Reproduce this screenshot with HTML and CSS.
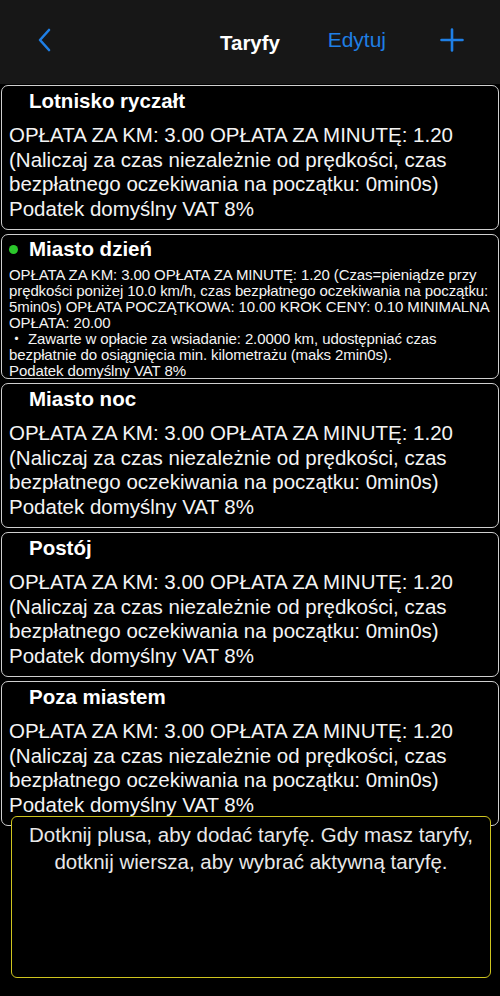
FILE: index.html
```html
<!DOCTYPE html>
<html lang="pl">
<head>
  <meta charset="UTF-8">
  <title>Taryfy</title>
  <link rel="stylesheet" href="styles.css">
</head>
<body>

<div class="ekran">

  <div class="nav">
    <div class="nav-back">
      <svg width="16" height="24" viewBox="0 0 16 24"><path d="M12 2 L3 12 L12 22" fill="none" stroke="#1f7fe5" stroke-width="2.6" stroke-linecap="round" stroke-linejoin="round"/></svg>
    </div>
    <div class="nav-title">Taryfy</div>
    <div class="nav-edit">Edytuj</div>
    <div class="nav-plus">
      <svg width="24" height="24" viewBox="0 0 24 24"><path d="M12 1.5 V22.5 M1.5 12 H22.5" fill="none" stroke="#1f7fe5" stroke-width="2.6" stroke-linecap="round"/></svg>
    </div>
  </div>

  <div class="lista">

    <div class="taryfa">
      <div class="tytul"><span class="kropka"></span>Lotnisko ryczałt</div>
      <div class="opis">OPŁATA ZA KM: 3.00 OPŁATA ZA MINUTĘ: 1.20 (Naliczaj za czas niezależnie od prędkości, czas bezpłatnego oczekiwania na początku: 0min0s)<br>Podatek domyślny VAT 8%</div>
    </div>

    <div class="taryfa aktywna">
      <div class="tytul"><span class="kropka"></span>Miasto dzień</div>
      <div class="opis maly">OPŁATA ZA KM: 3.00 OPŁATA ZA MINUTĘ: 1.20 (Czas=pieniądze przy prędkości poniżej 10.0 km/h, czas bezpłatnego oczekiwania na początku: 5min0s) OPŁATA POCZĄTKOWA: 10.00 KROK CENY: 0.10 MINIMALNA OPŁATA: 20.00<br>・ Zawarte w opłacie za wsiadanie: 2.0000 km, udostępniać czas bezpłatnie do osiągnięcia min. kilometrażu (maks 2min0s).<br>Podatek domyślny VAT 8%</div>
    </div>

    <div class="taryfa">
      <div class="tytul"><span class="kropka"></span>Miasto noc</div>
      <div class="opis">OPŁATA ZA KM: 3.00 OPŁATA ZA MINUTĘ: 1.20 (Naliczaj za czas niezależnie od prędkości, czas bezpłatnego oczekiwania na początku: 0min0s)<br>Podatek domyślny VAT 8%</div>
    </div>

    <div class="taryfa">
      <div class="tytul"><span class="kropka"></span>Postój</div>
      <div class="opis">OPŁATA ZA KM: 3.00 OPŁATA ZA MINUTĘ: 1.20 (Naliczaj za czas niezależnie od prędkości, czas bezpłatnego oczekiwania na początku: 0min0s)<br>Podatek domyślny VAT 8%</div>
    </div>

    <div class="taryfa">
      <div class="tytul"><span class="kropka"></span>Poza miastem</div>
      <div class="opis">OPŁATA ZA KM: 3.00 OPŁATA ZA MINUTĘ: 1.20 (Naliczaj za czas niezależnie od prędkości, czas bezpłatnego oczekiwania na początku: 0min0s)<br>Podatek domyślny VAT 8%</div>
    </div>

  </div>

  <div class="podpowiedz">
    Dotknij plusa, aby dodać taryfę. Gdy masz taryfy, dotknij wiersza, aby wybrać aktywną taryfę.
  </div>

</div>

</body>
</html>
```

FILE: styles.css
```css
body {
  margin: 0;
  background: #000;
  font-family: 'Liberation Sans', Arial, sans-serif;
  color: #fff;
}

.ekran {
  position: relative;
  width: 500px;
  height: 996px;
  overflow: hidden;
}

.nav {
  height: 84px;
  background: #171717;
  display: flex;
  align-items: center;
  position: relative;
}

.nav-back {
  margin-left: 37px;
  margin-top: -4px;
  display: flex;
}

.nav-title {
  position: absolute;
  left: 0;
  right: 0;
  top: 31px;
  text-align: center;
  font-size: 20.5px;
  font-weight: bold;
  pointer-events: none;
}

.nav-edit {
  margin-left: auto;
  margin-top: -4px;
  color: #1f7fe5;
  font-size: 21px;
}

.nav-plus {
  margin-left: 54px;
  margin-right: 36px;
  margin-top: -4px;
  display: flex;
}

.lista {
  padding: 1px 1px 0;
  display: flex;
  flex-direction: column;
  gap: 4px;
}

.taryfa {
  border: 1px solid #cfcfcf;
  border-radius: 7px;
  height: 143px;
  overflow: hidden;
  padding: 0 0 0 7px;
}

.tytul {
  display: flex;
  align-items: center;
  height: 30px;
  font-size: 20.5px;
  font-weight: bold;
}

.kropka {
  width: 9px;
  height: 9px;
  border-radius: 50%;
  margin-right: 11px;
}

.aktywna .kropka {
  background: #2bc72b;
}

.aktywna .tytul {
  margin-top: -1px;
}

.opis {
  font-size: 20.5px;
  line-height: 24.5px;
  margin-top: 7px;
  color: #f4f4f4;
}

.opis.maly {
  font-size: 15px;
  line-height: 16px;
  margin-top: 3px;
  letter-spacing: -0.1px;
  font-family: 'Liberation Sans', 'Noto Sans CJK JP', sans-serif;
}

.podpowiedz {
  position: absolute;
  left: 11px;
  top: 816px;
  width: 466px;
  height: 156px;
  padding: 4px 6px 0;
  border: 1px solid #cfc51f;
  border-radius: 6px;
  background: #000;
  text-align: center;
  font-size: 20.5px;
  line-height: 27px;
  color: #e8e8e8;
}
```
